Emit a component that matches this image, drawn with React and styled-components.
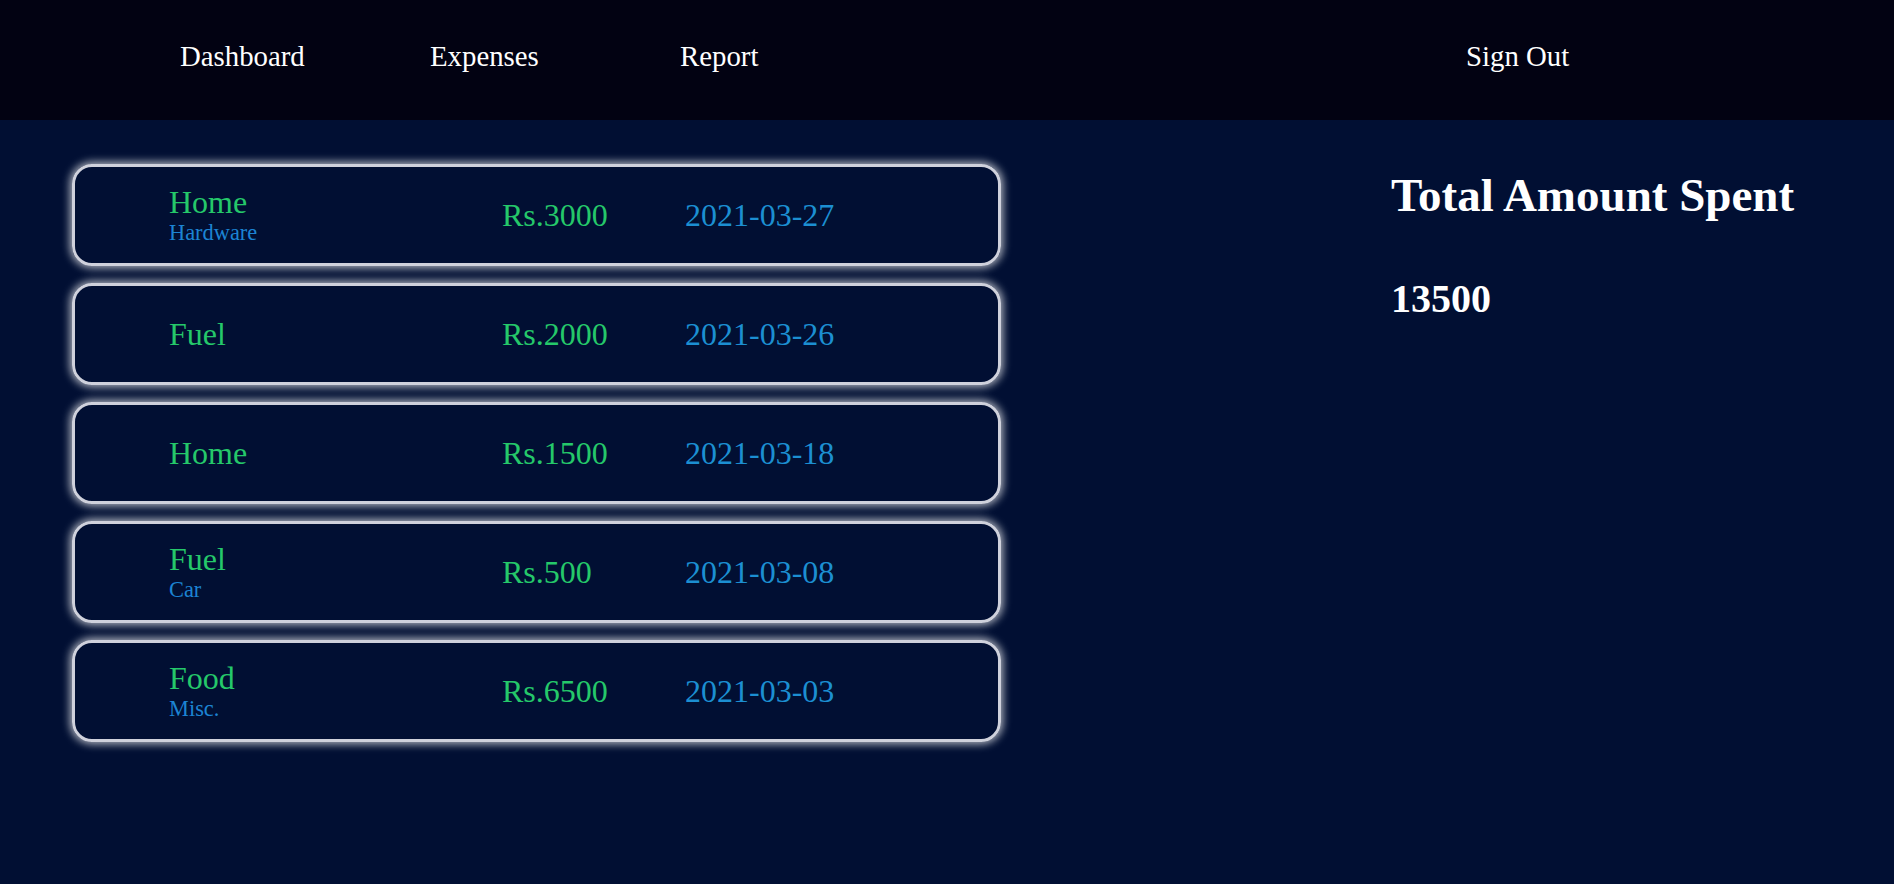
import React from "react"
import styled, { createGlobalStyle } from "styled-components"

const GlobalStyle = createGlobalStyle`
  * {
    box-sizing: border-box;
  }
  html, body {
    margin: 0;
    padding: 0;
    background: #010f33;
    font-family: "Liberation Serif", "Times New Roman", serif;
    color: #fff;
  }
`

const expenses = [
  { title: "Home", note: "Hardware", amount: 3000, date: "2021-03-27" },
  { title: "Fuel", note: "", amount: 2000, date: "2021-03-26" },
  { title: "Home", note: "", amount: 1500, date: "2021-03-18" },
  { title: "Fuel", note: "Car", amount: 500, date: "2021-03-08" },
  { title: "Food", note: "Misc.", amount: 6500, date: "2021-03-03" },
]

const Page = styled.div`
  min-height: 884px;
  background: #010f33;
`

const Navbar = styled.nav`
  height: 120px;
  background: #020212;
  display: flex;
  align-items: center;
  padding: 0 178px 8px 180px;
`

const NavLink = styled.a`
  width: 250px;
  font-size: 28.8px;
  color: #fff;
  text-decoration: none;
  cursor: pointer;
  margin-left: ${(p) => (p.$push ? "auto" : "0")};
`

const Main = styled.main`
  display: flex;
  padding: 44px 0 0 72px;
`

const List = styled.ul`
  list-style: none;
  margin: 0;
  padding: 0;
  width: 929px;
  display: flex;
  flex-direction: column;
  gap: 17px;
`

const Card = styled.li`
  height: 102px;
  border: 3px solid #cfd1dc;
  border-radius: 20px;
  box-shadow: 0 0 8px 2px rgba(255, 255, 255, 0.7);
  display: grid;
  grid-template-columns: 333px 183px 1fr;
  align-items: center;
  padding-left: 94px;
`

const TitleBlock = styled.div`
  display: flex;
  flex-direction: column;
`

const Title = styled.span`
  font-size: 32px;
  line-height: 36px;
  color: #25c86a;
`

const Note = styled.span`
  font-size: 22.4px;
  line-height: 26px;
  color: #1c84d4;
`

const Amount = styled.span`
  font-size: 32px;
  color: #25c86a;
`

const DateText = styled.span`
  font-size: 32px;
  color: #1c8fd2;
`

const Summary = styled.section`
  margin-left: 390px;
`

const SummaryTitle = styled.h1`
  font-size: 47px;
  font-weight: bold;
  margin: 0;
  line-height: 62px;
`

const SummaryValue = styled.h2`
  font-size: 40px;
  font-weight: bold;
  margin: 48px 0 0;
  line-height: 50px;
`

const App = () => {
  const total = expenses.reduce((s, e) => s + e.amount, 0)
  return (
    <Page>
      <GlobalStyle />
      <Navbar>
        <NavLink>Dashboard</NavLink>
        <NavLink>Expenses</NavLink>
        <NavLink>Report</NavLink>
        <NavLink $push>Sign Out</NavLink>
      </Navbar>
      <Main>
        <List>
          {expenses.map((e, i) => (
            <Card key={i}>
              <TitleBlock>
                <Title>{e.title}</Title>
                {e.note && <Note>{e.note}</Note>}
              </TitleBlock>
              <Amount>Rs.{e.amount}</Amount>
              <DateText>{e.date}</DateText>
            </Card>
          ))}
        </List>
        <Summary>
          <SummaryTitle>Total Amount Spent</SummaryTitle>
          <SummaryValue>{total}</SummaryValue>
        </Summary>
      </Main>
    </Page>
  )
}

export default App
